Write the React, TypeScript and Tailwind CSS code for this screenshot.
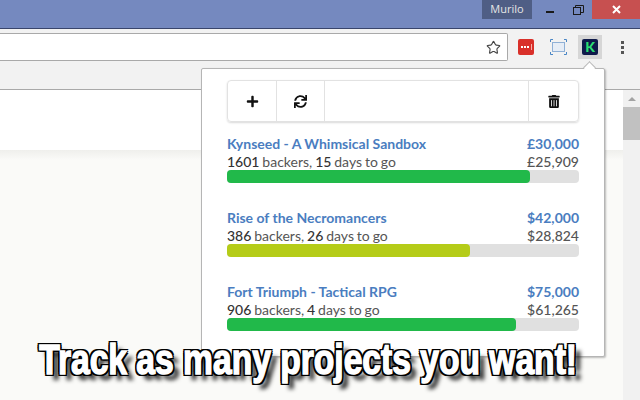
import { Star } from 'lucide-react'
import { FaPlus, FaSync, FaTrashAlt } from 'react-icons/fa'

// ─── Data ─────────────────────────────────────────────

const PROJECTS = [
  { name: 'Kynseed - A Whimsical Sandbox', goal: '£30,000', raised: '£25,909', backers: '1601', days: '15', barClass: 'w-[303px] bg-[#21b94a]' },
  { name: 'Rise of the Necromancers', goal: '$42,000', raised: '$28,824', backers: '386', days: '26', barClass: 'w-[243px] bg-[#b5cc18]' },
  { name: 'Fort Triumph - Tactical RPG', goal: '$75,000', raised: '$61,265', backers: '906', days: '4', barClass: 'w-[289px] bg-[#21b94a]' },
]

// ─── Pieces ───────────────────────────────────────────

function WindowControls() {
  return (
    <div className="flex h-[28px] justify-end bg-[#7589bf]">
      <div className="mr-[4px] flex h-[19px] w-[50px] items-center justify-center bg-[#4f5e85] font-['Open_Sans',sans-serif] text-[11px] text-[#e6e6e6]">Murilo</div>
      <div className="flex h-[19px] w-[28px] items-center justify-center pt-[4px]">
        <div className="h-[2px] w-[8px] bg-[#1a1a1a]" />
      </div>
      <div className="flex h-[19px] w-[28px] items-center justify-center">
        <svg width="11" height="10" viewBox="0 0 11 10" fill="none" stroke="#1a1a1a" strokeWidth="1">
          <rect x="0.5" y="2.5" width="7" height="7" />
          <path d="M2.5 2.5V0.5H10.5V7.5H7.5" />
        </svg>
      </div>
      <div className="flex h-[19px] w-[48px] items-center justify-center bg-[#c75050]">
        <svg width="9" height="9" viewBox="0 0 9 9" stroke="#fff" strokeWidth="2">
          <path d="M1 1L8 8M8 1L1 8" />
        </svg>
      </div>
    </div>
  )
}

function Toolbar() {
  return (
    <div className="flex h-[62px] items-start border-y border-t-[#39456b] border-b-[#a9a9a9] bg-[#f2f2f2] pt-[4px]">
      <div className="flex h-[28px] w-[508px] items-center justify-end rounded-r-[2px] border border-l-0 border-[#a9a9a9] bg-white pr-[6px]">
        <Star className="h-[15px] w-[15px] text-[#444]" strokeWidth={1.8} />
      </div>
      <div className="ml-[10px] mt-[6px]">
        <svg width="16" height="16" viewBox="0 0 16 16">
          <rect width="16" height="16" rx="2" fill="#d9302a" />
          <path d="M3 7h2v2H3zM6 7h2v2H6zM9 7h2v2H9z" fill="#fff" />
          <path d="M13 5h1v6h-1z" fill="#f3b0ac" />
        </svg>
      </div>
      <div className="ml-[16px] mt-[6px]">
        <svg width="17" height="16" viewBox="0 0 17 16" fill="none">
          <rect x="2.5" y="3.5" width="12" height="9" fill="#e6edf6" stroke="#8fb0d6" />
          <path d="M0.5 3V0.5H3M14 0.5H16.5V3M16.5 13V15.5H14M3 15.5H0.5V13" stroke="#4a86c5" />
        </svg>
      </div>
      <div className="ml-[11px] mt-[2px] flex h-[24px] w-[24px] items-center justify-center bg-[#d6d6d6]">
        <div className="flex h-[16px] w-[16px] items-center justify-center rounded-[2px] bg-[#0f1a4a] text-[14px] leading-none font-black text-[#2bde73]">K</div>
      </div>
      <div className="ml-[19px] mt-[8px] flex flex-col gap-[2px]">
        <div className="h-[3px] w-[3px] bg-[#555]" />
        <div className="h-[3px] w-[3px] bg-[#555]" />
        <div className="h-[3px] w-[3px] bg-[#555]" />
      </div>
    </div>
  )
}

function ProjectRow({ name, goal, raised, backers, days, barClass }: (typeof PROJECTS)[number]) {
  return (
    <div className="h-[74px] text-[14px] leading-[18px]">
      <div className="flex justify-between font-bold text-[#4a7dc0]">
        <span>{name}</span>
        <span>{goal}</span>
      </div>
      <div className="flex justify-between text-[#555]">
        <span className="[word-spacing:-0.7px]">
          <b className="font-medium text-[#333]">{backers}</b> backers, <b className="font-medium text-[#333]">{days}</b> days to go
        </span>
        <span className="font-medium">{raised}</span>
      </div>
      <div className="-mt-[1px] h-[13px] w-full rounded-[4px] bg-[#e0e0e0]">
        <div className={`h-full rounded-[4px] ${barClass}`} />
      </div>
    </div>
  )
}

function Popup() {
  return (
    <div className="absolute left-[201px] top-[68px] h-[289px] w-[404px] rounded-[2px] border border-[#b5b5b5] bg-white px-[25px] pt-[11px] shadow-[1px_1px_2px_rgba(0,0,0,0.25)]">
      {/* little arrow up to the extension button */}
      <div className="absolute -top-[6px] left-[383px] h-[9px] w-[9px] rotate-45 border-l border-t border-[#b5b5b5] bg-white" />
      <div className="mb-[13px] flex h-[42px] w-[352px] rounded-[4px] border border-[#e2e2e2] shadow-[0_1px_2px_rgba(0,0,0,0.15)]">
        <div className="flex w-[49px] items-center justify-center border-r border-[#e2e2e2]">
          <FaPlus className="h-[13px] w-[13px] text-[#111]" />
        </div>
        <div className="flex w-[48px] items-center justify-center border-r border-[#e2e2e2]">
          <FaSync className="h-[13px] w-[13px] text-[#111]" />
        </div>
        <div className="flex-1 border-r border-[#e2e2e2]" />
        <div className="flex w-[49px] items-center justify-center">
          <FaTrashAlt className="h-[13px] w-[12px] text-[#111]" />
        </div>
      </div>
      {PROJECTS.map((p) => (
        <ProjectRow key={p.name} {...p} />
      ))}
    </div>
  )
}

// ─── Page ─────────────────────────────────────────────

export default function App() {
  return (
    <div className="relative h-[400px] w-[640px] overflow-hidden bg-[#fafaf8] font-['Lato',sans-serif]">
      <WindowControls />
      <Toolbar />

      <div className="flex h-[310px]">
        <div className="flex-1">
          <div className="h-[60px] bg-white" />
          <div className="h-[10px] bg-gradient-to-b from-[#efefec] to-[#fafaf8]" />
        </div>
        <div className="w-[17px] bg-[#f1f1f1]">
          <div className="flex h-[17px] items-center justify-center">
            <div className="h-0 w-0 border-x-[4px] border-b-[4px] border-x-transparent border-b-[#a3a3a3]" />
          </div>
          <div className="h-[33px] bg-[#c1c1c1]" />
        </div>
      </div>

      <Popup />

      <div className="absolute inset-x-0 top-[332px] flex justify-center pr-[24px]">
        <div className="origin-center scale-x-[0.8] whitespace-nowrap font-['Liberation_Sans',sans-serif] text-[42px] leading-[56px] font-bold text-white [-webkit-text-stroke:1.5px_#fff] [text-shadow:2.5px_0_0_#000,-2.5px_0_0_#000,0_2px_0_#000,0_-2px_0_#000,2.5px_2px_0_#000,-2.5px_-2px_0_#000,2.5px_-2px_0_#000,-2.5px_2px_0_#000,8px_6px_5px_rgba(0,0,0,0.85)]">
          Track as many projects you want!
        </div>
      </div>
    </div>
  )
}
